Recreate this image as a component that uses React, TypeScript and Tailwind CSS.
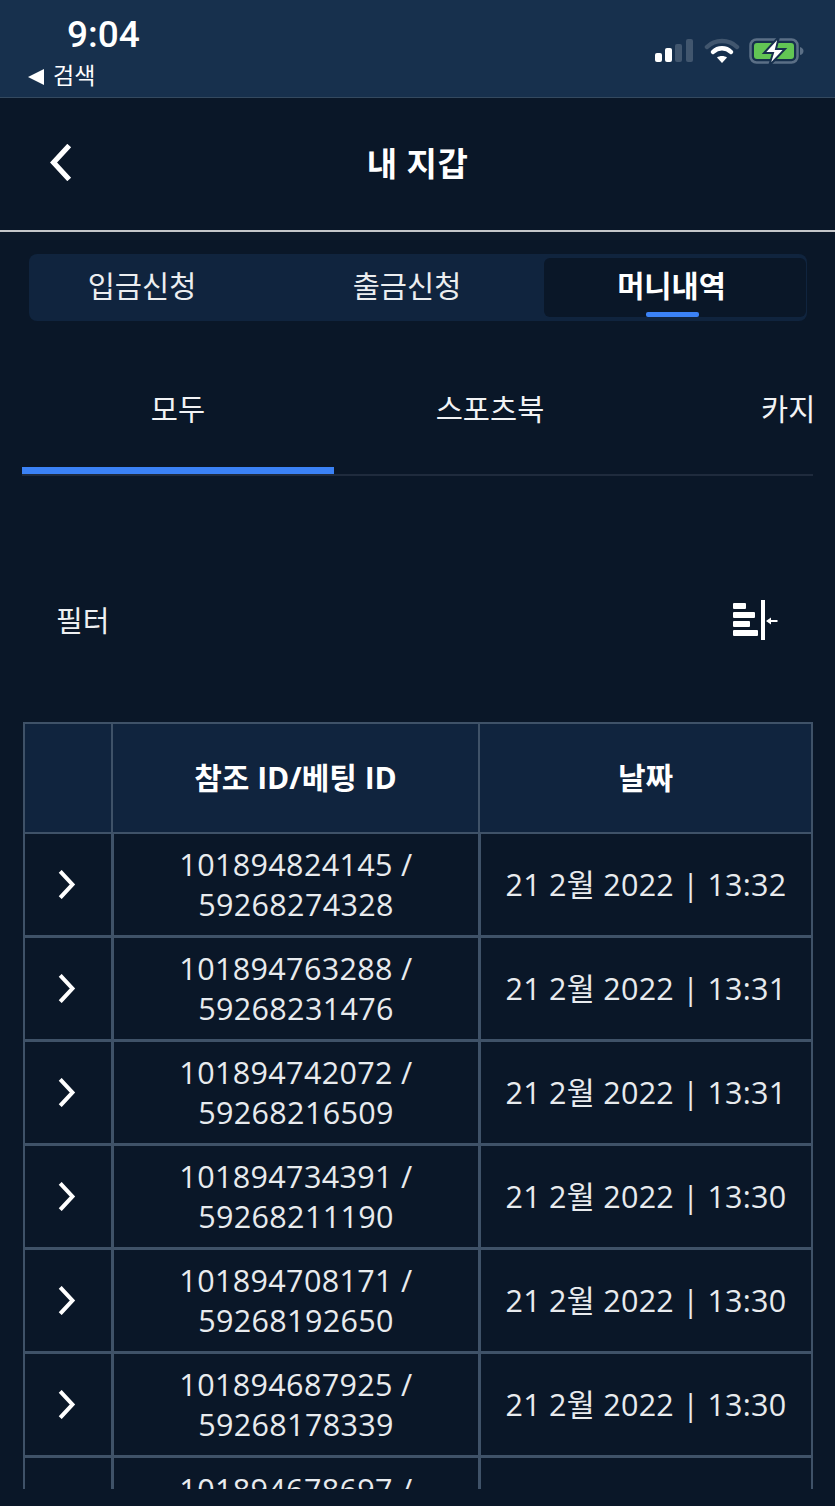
import React from "react";

const FONT = "font-['Open_Sans','Noto_Sans_CJK_KR',sans-serif]";

const rows = [
  ["101894824145 /", "59268274328", "21 2월 2022 | 13:32"],
  ["101894763288 /", "59268231476", "21 2월 2022 | 13:31"],
  ["101894742072 /", "59268216509", "21 2월 2022 | 13:31"],
  ["101894734391 /", "59268211190", "21 2월 2022 | 13:30"],
  ["101894708171 /", "59268192650", "21 2월 2022 | 13:30"],
  ["101894687925 /", "59268178339", "21 2월 2022 | 13:30"],
];

function Chevron({ left = false, className = "" }: { left?: boolean; className?: string }) {
  return (
    <svg viewBox="0 0 20 32" className={className} fill="none" stroke="white" strokeWidth="4.5" strokeLinecap="square" strokeLinejoin="miter">
      <path d={left ? "M16 3 L4 16 L16 29" : "M4 3 L16 16 L4 29"} />
    </svg>
  );
}

function StatusIcons() {
  return (
    <div className="flex items-center gap-[10px]">
      <svg width="40" height="24" viewBox="0 0 40 24">
        <rect x="1" y="14" width="7" height="9" rx="2" fill="#fff" />
        <rect x="11" y="9" width="7" height="14" rx="2" fill="#fff" />
        <rect x="21" y="5" width="7" height="18" rx="2" fill="#41566e" />
        <rect x="32" y="0" width="7" height="23" rx="2" fill="#41566e" />
      </svg>
      <svg width="36" height="26" viewBox="0 0 36 26" fill="none">
        <path d="M3 9 C11 1 25 1 33 9" stroke="#41566e" strokeWidth="4.5" strokeLinecap="round" />
        <path d="M9 14 C14 9 22 9 27 14" stroke="#fff" strokeWidth="4.5" strokeLinecap="round" />
        <path d="M18 25 L13 19.5 C15.5 17.5 20.5 17.5 23 19.5 Z" fill="#fff" />
      </svg>
      <svg width="55" height="30" viewBox="0 0 55 30" fill="none" className="ml-[-1px]">
        <rect x="1.5" y="3.5" width="47" height="23" rx="6" stroke="#5b6f86" strokeWidth="2.5" />
        <rect x="5" y="7" width="40" height="16" rx="3" fill="#62c554" />
        <path d="M51 11 C53.5 11.5 54.5 13.5 54.5 15 C54.5 16.5 53.5 18.5 51 19 Z" fill="#5b6f86" />
        <path d="M30 0.5 L15 17 H24 L20 30 L36 13 H27 Z" fill="#fff" stroke="#17304d" strokeWidth="2" />
      </svg>
    </div>
  );
}

function FilterIcon() {
  return (
    <svg width="46" height="42" viewBox="0 0 46 42" fill="white">
      <rect x="0" y="3" width="13" height="6" rx="1" />
      <rect x="0" y="12" width="22" height="6" rx="1" />
      <rect x="0" y="21" width="17" height="6" rx="1" />
      <rect x="0" y="30" width="25" height="6" rx="1" />
      <rect x="28" y="0" width="4" height="40" />
      <path d="M33 21 L38 17.5 V20 H44.5 V22 H38 V24.5 Z" />
    </svg>
  );
}

function Row({ a, b, c }: { a: string; b: string; c: string }) {
  return (
    <div className="grid h-[104px] grid-cols-[89px_367px_1fr] border-b-[3px] border-[#3f5268] text-[30.5px] leading-[40px] tracking-[0.35px] text-[#e8ebee]">
      <div className="flex items-center justify-center border-r-[3px] border-[#3f5268]">
        <Chevron className="ml-[-3px] h-[29px] w-[18px]" />
      </div>
      <div className="flex flex-col items-center justify-center border-r-[3px] border-[#3f5268] pb-[2px] text-center">
        <span>{a}</span>
        <span>{b}</span>
      </div>
      <div className="flex items-center justify-center whitespace-pre pb-[2px] tracking-[0.25px]">{c}</div>
    </div>
  );
}

export default function App() {
  return (
    <div className={`${FONT} h-[1506px] w-[835px] overflow-hidden bg-[#0a1728] text-white`}>
      <div className="relative flex h-[98px] justify-between border-b border-[#34495f] bg-[#17304d] font-['Roboto','Noto_Sans_CJK_KR',sans-serif]">
        <div className="flex flex-col pl-[28px]">
          <div className="mt-[14px] pl-[39px] text-[37px] font-medium leading-[42px]">9:04</div>
          <div className="mt-[6px] flex items-center gap-[9px] text-[23px] leading-[30px]">
            <span className="h-0 w-0 border-y-[8px] border-r-[16px] border-y-transparent border-r-white" />
            <span>검색</span>
          </div>
        </div>
        <div className="pr-[31px] pt-[36px]">
          <StatusIcons />
        </div>
      </div>

      <div className="relative flex h-[134px] items-center justify-center border-b-[2px] border-[#c4c6c9]">
        <Chevron left className="absolute left-[48px] top-[46px] h-[37px] w-[25px]" />
        <h1 className="text-[33px] font-bold leading-[40px] tracking-[0.5px]">내 지갑</h1>
      </div>

      <div className="mx-[29px] mt-[22px] grid h-[67px] w-[778px] grid-cols-[257px_257px_1fr] rounded-[8px] bg-[#10243e] py-[4px] pl-[4px] pr-[1px] text-[29.5px]">
        <div className="flex items-center justify-center pb-[2px] pr-[39px] text-[#eceef0]">입금신청</div>
        <div className="flex items-center justify-center pb-[2px] pr-[23px] text-[#eceef0]">출금신청</div>
        <div className="relative ml-[-3px] flex items-center justify-center rounded-[6px] bg-[#0a1728] pb-[2px] pr-[7px] font-bold">
          머니내역
          <span className="absolute bottom-0 left-[102px] h-[5px] w-[53px] rounded-[2px] bg-[#3b82f6]" />
        </div>
      </div>

      <div className="relative mx-[22px] mt-[33px] h-[122px] overflow-hidden border-b-[2px] border-[#1f2b3d] text-[29.5px] text-[#f2f3f5]">
        <div className="flex h-[110px]">
          <div className="flex w-[312px] shrink-0 justify-center pt-[33px] leading-[44px]">모두</div>
          <div className="flex w-[312px] shrink-0 justify-center pt-[33px] leading-[44px]">스포츠북</div>
          <div className="flex w-[312px] shrink-0 justify-start pl-[115px] pt-[33px] leading-[44px]">카지노</div>
        </div>
        <div className="absolute bottom-0 left-0 h-[7px] w-[312px] bg-[#3b82f6]" />
      </div>

      <div className="mx-[22px] mt-[115px] flex h-[60px] items-center justify-between pl-[34px] pr-[34px]">
        <span className="text-[29px] text-[#eef0f2]">필터</span>
        <FilterIcon />
      </div>

      <div className="mx-[23px] mt-[71px] h-[767px] w-[790px] overflow-hidden border-x-[2px] border-t-[2px] border-[#3f5268]">
        <div className="grid h-[110px] grid-cols-[88px_367px_1fr] border-b-[2px] border-[#3f5268] bg-[#10243e] text-[30px] font-bold">
          <div className="border-r-[2px] border-[#3f5268]" />
          <div className="flex items-center justify-center border-r-[2px] border-[#3f5268] pb-[2px]">참조 ID/베팅 ID</div>
          <div className="flex items-center justify-center pb-[2px]">날짜</div>
        </div>
        {rows.map((r) => (
          <Row key={r[0]} a={r[0]} b={r[1]} c={r[2]} />
        ))}
        <div className="grid h-[104px] grid-cols-[89px_367px_1fr] text-[30.5px] leading-[40px] tracking-[0.35px] text-[#e8ebee]">
          <div className="border-r-[3px] border-[#3f5268]" />
          <div className="flex flex-col items-center border-r-[3px] border-[#3f5268] pt-[11px]">101894678697 /</div>
          <div />
        </div>
      </div>
    </div>
  );
}
